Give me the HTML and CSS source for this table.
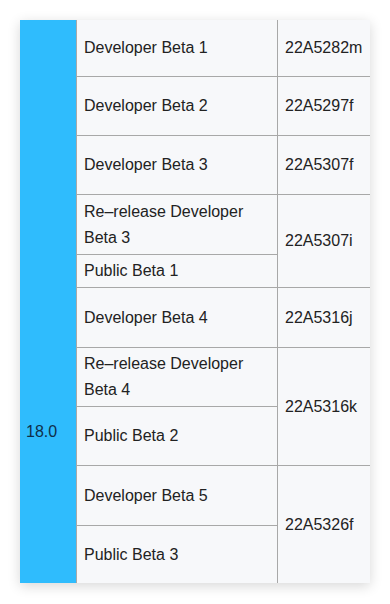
FILE: index.html
```html
<!DOCTYPE html>
<html>
<head>
<meta charset="utf-8">
<link rel="stylesheet" href="styles.css">
</head>
<body>
<div class="card">
  <div class="ver"><span>18.0</span></div>
  <div class="cell r1">Developer Beta 1</div>
  <div class="cell build r1">22A5282m</div>
  <div class="cell r2">Developer Beta 2</div>
  <div class="cell build r2">22A5297f</div>
  <div class="cell r3">Developer Beta 3</div>
  <div class="cell build r3">22A5307f</div>
  <div class="cell r4">Re–release Developer Beta 3</div>
  <div class="cell build r4-5">22A5307i</div>
  <div class="cell r5">Public Beta 1</div>
  <div class="cell r6">Developer Beta 4</div>
  <div class="cell build r6">22A5316j</div>
  <div class="cell r7">Re–release Developer Beta 4</div>
  <div class="cell build r7-8">22A5316k</div>
  <div class="cell r8">Public Beta 2</div>
  <div class="cell r9">Developer Beta 5</div>
  <div class="cell build r9-10">22A5326f</div>
  <div class="cell r10">Public Beta 3</div>
</div>
</body>
</html>
```
FILE: styles.css
```css
html, body {
  margin: 0;
  padding: 0;
  background: #ffffff;
}
body {
  padding: 20px;
  font-family: "Liberation Sans", Arial, sans-serif;
  font-size: 16px;
  color: #222222;
}
.card {
  width: 350px;
  display: grid;
  grid-template-columns: 56px 200px 92px;
  grid-template-rows: 56px 58px 58px 59px 32px 59px 58px 58px 59px 57px;
  gap: 1px;
  background: #a8a8a8;
  box-shadow: 0 3px 12px rgba(0, 0, 0, 0.16);
}
.ver {
  grid-column: 1;
  grid-row: 1 / span 10;
  background: #2fbcfd;
  color: #0f2f4a;
  display: flex;
  align-items: center;
  padding: 260px 0 0 6px;
  line-height: 26px;
}
.cell {
  background: #f7f8fa;
  display: flex;
  align-items: center;
  padding: 0 7px;
  line-height: 26px;
  grid-column: 2;
}
.build { grid-column: 3; }
.r1 { grid-row: 1; }
.r2 { grid-row: 2; }
.r3 { grid-row: 3; }
.r4 { grid-row: 4; }
.r4-5 { grid-row: 4 / span 2; }
.r5 { grid-row: 5; }
.r6 { grid-row: 6; }
.r7 { grid-row: 7; }
.r7-8 { grid-row: 7 / span 2; }
.r8 { grid-row: 8; }
.r9 { grid-row: 9; }
.r9-10 { grid-row: 9 / span 2; }
.r10 { grid-row: 10; }
```
